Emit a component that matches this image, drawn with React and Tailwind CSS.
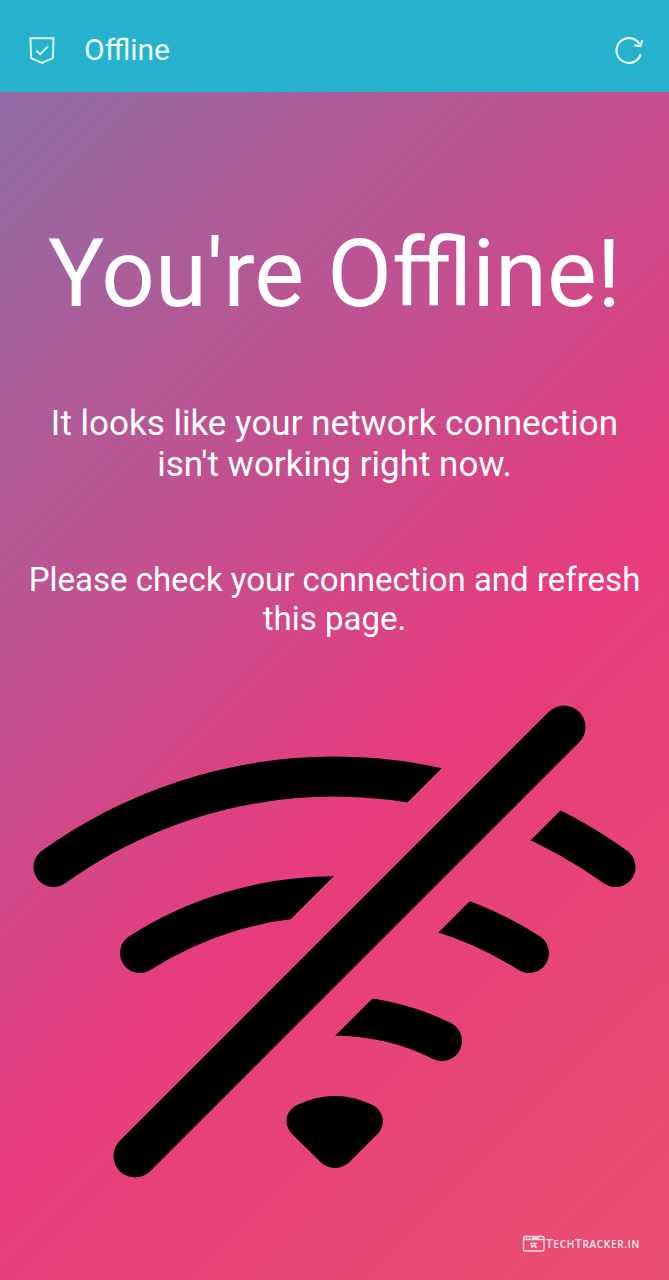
export default function App() {
  return (
    <div className="flex h-[1280px] w-[669px] flex-col overflow-hidden font-['Roboto',sans-serif] text-white">
      <header className="flex h-[92px] shrink-0 items-center bg-[#26b2cc] pt-2 pr-[25px] pl-7">
        <svg className="h-[30px] w-[28px]" viewBox="0 0 28 30" fill="none" stroke="#dcfafa" strokeWidth="2">
          <path d="M2.5 3.2h23l-.6 20L14 28 3.1 23.200z" />
          <path d="m8.200 15.500 4 3.700 7.800-7.800" />
        </svg>
        <h1 className="ml-7 flex-1 text-[30px] leading-9 text-[#e8fcfc]">Offline</h1>
        <svg className="h-[32px] w-[32px]" viewBox="0 0 32 32" fill="none" stroke="#e4fbfb" strokeWidth="2.2">
          <path d="M28.800 20.200A12.400 12.400 0 1 1 27.500 10" />
          <path d="m22.300 11.300 6.200.800 1.800-6" />
        </svg>
      </header>
      <main className="flex flex-1 flex-col bg-[linear-gradient(135deg,#906ca6_0%,#e73c7e_57.8%,#e94f70_100%)] text-center">
        <h2 className="mt-[127px] text-[94px] leading-[110px] whitespace-nowrap">You're Offline!</h2>
        <p className="mt-[74px] text-[35px] leading-[41px]">
          It looks like your network connection
          <br />
          isn't working right now.
        </p>
        <p className="mt-[75px] text-[33px] leading-[39px] whitespace-nowrap">
          Please check your connection and refresh
          <br />
          this page.
        </p>
        <svg className="mt-[60px] h-[490px] w-[669px] shrink-0" viewBox="0 700 669 490">
          <defs>
            <clipPath id="left-of-slash">
              <path d="M0 700H512L22 1190H0z" />
            </clipPath>
            <clipPath id="right-of-slash">
              <path d="M673 700V1190H183z" />
            </clipPath>
          </defs>
          <g fill="none" stroke="#000" strokeWidth="40" strokeLinecap="round">
            <g clipPath="url(#left-of-slash)">
              <path d="M53.500 869A482 482 0 0 1 615.500 869" />
              <path d="M140 955A362 362 0 0 1 529 955" />
            </g>
            <g clipPath="url(#right-of-slash)">
              <path d="M53.500 869A482 482 0 0 1 615.500 869" />
              <path d="M140 955A362 362 0 0 1 529 955" />
              <path d="M227 1043A242 242 0 0 1 442 1043" />
            </g>
            <path d="M135 1158 564 729" strokeWidth="43" />
          </g>
          <path d="M297 1107Q335 1089 372.500 1107C384 1113 386.500 1127 377 1136.500L348.500 1165Q334.500 1175 321.500 1165L292.500 1136.500C283 1127 285 1113 297 1107z" />
        </svg>
        <footer className="mt-[46px] mr-[29px] flex h-5 items-center justify-end">
          <svg className="h-[18px] w-[24px]" viewBox="0 0 24 18" fill="none" stroke="#fbdce5" strokeWidth="1.300">
            <rect x="1.500" y="1.500" width="20.500" height="14.500" rx="1.500" />
            <path d="M1.500 4.500H22M4 3h1m2 0h1m2 0h7" />
            <path d="M8 8.300h7M9 8.500l1 3.500 1.500-1.500 2.700 2.500M14.500 8.500l-2.500 2 3 2" />
          </svg>
          <span className="font-['Open_Sans',sans-serif] text-[10px] leading-5 font-semibold tracking-[0.700px] text-[#fdebf0]">
            <span className="text-xs">T</span>ECH<span className="text-xs">T</span>RACKER.IN
          </span>
        </footer>
      </main>
    </div>
  );
}
